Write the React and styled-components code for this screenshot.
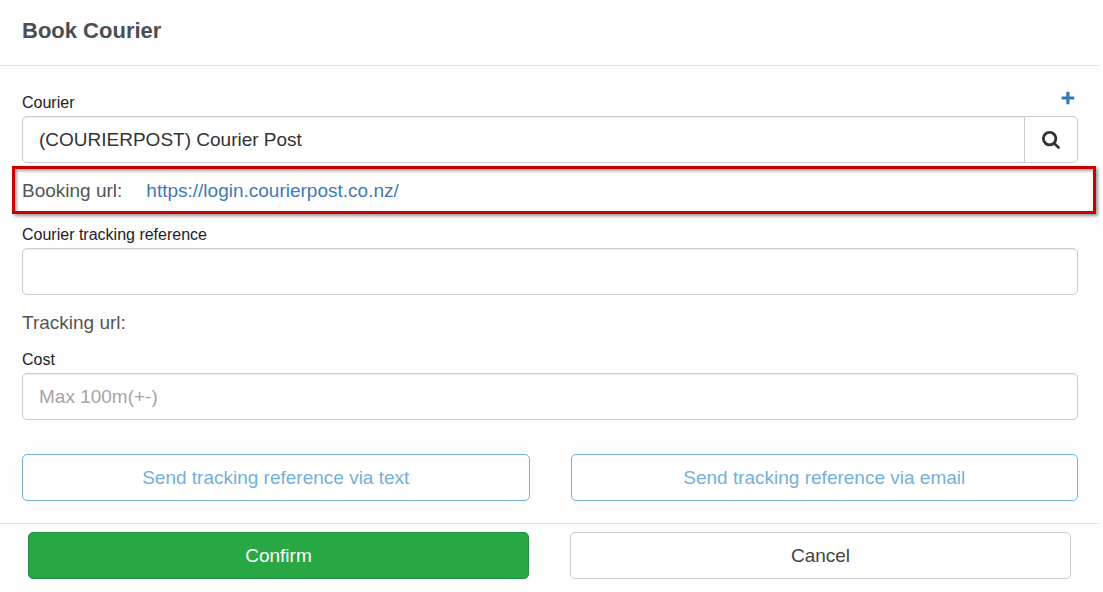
import React, { useState } from 'react';
import styled, { createGlobalStyle, css } from 'styled-components';

export default function App() {
    const [courier, setCourier] = useState('(COURIERPOST) Courier Post');
    const [reference, setReference] = useState('');
    const [cost, setCost] = useState('');

    return (
        <>
            <GlobalStyle />
            <Dialog>
                <Header>
                    <Title>Book Courier</Title>
                </Header>
                <Body>
                    <LabelRow>
                        <Label htmlFor="courier">Courier</Label>
                        <AddButton type="button" aria-label="Add courier">
                            <PlusIcon />
                        </AddButton>
                    </LabelRow>
                    <InputGroup>
                        <Input
                            id="courier"
                            grouped
                            value={courier}
                            onChange={(e) => setCourier(e.target.value)}
                        />
                        <SearchButton type="button" aria-label="Search couriers">
                            <SearchIcon />
                        </SearchButton>
                    </InputGroup>
                    <HighlightRow>
                        <span>Booking url:</span>
                        <UrlLink href="https://login.courierpost.co.nz/">
                            https://login.courierpost.co.nz/
                        </UrlLink>
                    </HighlightRow>
                    <LabelRow>
                        <Label htmlFor="reference">Courier tracking reference</Label>
                    </LabelRow>
                    <Input
                        id="reference"
                        value={reference}
                        onChange={(e) => setReference(e.target.value)}
                    />
                    <UrlRow>Tracking url:</UrlRow>
                    <LabelRow>
                        <Label htmlFor="cost">Cost</Label>
                    </LabelRow>
                    <Input
                        id="cost"
                        placeholder="Max 100m(+-)"
                        value={cost}
                        onChange={(e) => setCost(e.target.value)}
                    />
                    <SendRow>
                        <Button type="button" variant="outline">Send tracking reference via text</Button>
                        <Button type="button" variant="outline">Send tracking reference via email</Button>
                    </SendRow>
                </Body>
                <Footer>
                    <Button type="button" variant="success">Confirm</Button>
                    <Button type="button" variant="plain">Cancel</Button>
                </Footer>
            </Dialog>
        </>
    );
}

const PlusIcon = () => (
    <svg width="14" height="14" viewBox="0 0 14 14" fill="currentColor" aria-hidden="true">
        <path d="M5.3 0.8h3.2v4.6h4.7v3.2h-4.7v4.6h-3.2v-4.6h-4.7v-3.2h4.7z" />
    </svg>
);

const SearchIcon = () => (
    <svg width="18" height="18" viewBox="0 0 1664 1664" fill="currentColor" aria-hidden="true">
        <path d="M1152 704q0-185-131.500-316.500T704 256 387.500 387.500 256 704t131.500 316.500T704 1152t316.500-131.500T1152 704zm512 832q0 52-38 90t-90 38q-54 0-90-38l-343-342q-179 124-399 124-143 0-273.500-55.500t-225-150-150-225T0 704t55.500-273.500 150-225 225-150T704 0t273.500 55.500 225 150 150 225T1408 704q0 220-124 399l343 343q37 37 37 90z" />
    </svg>
);

const GlobalStyle = createGlobalStyle`
    * {
        box-sizing: border-box;
    }
    body {
        margin: 0;
        background: #fefefe;
        color: #555;
        font-family: "Liberation Sans", Arial, sans-serif;
        font-size: 19px;
    }
    button, input {
        font-family: inherit;
        font-size: inherit;
    }
`;
const Dialog = styled.main`
    margin-right: 3px;
`;
const Header = styled.header`
    padding: 16px 22px 19px;
    border-bottom: 1px solid #e5e5e5;
`;
const Title = styled.h1`
    margin: 0;
    font-size: 22px;
    line-height: 30px;
    font-weight: 700;
    color: #4c4f52;
`;
const Body = styled.div`
    padding: 27px 22px 22px;
`;
const LabelRow = styled.div`
    display: flex;
    justify-content: space-between;
    align-items: flex-start;
    height: 20px;
    margin-bottom: 3px;
`;
const Label = styled.label`
    font-size: 16px;
    line-height: 20px;
    color: #222;
`;
const AddButton = styled.button`
    display: flex;
    padding: 0 3px;
    margin-top: -2px;
    border: none;
    background: none;
    color: #337ab7;
    cursor: pointer;
`;
const InputGroup = styled.div`
    display: flex;
`;
const Input = styled.input.withConfig({ shouldForwardProp: (prop) => prop !== 'grouped' })`
    display: block;
    width: 100%;
    min-width: 0;
    height: 47px;
    padding: 0 16px;
    border: 1px solid #ccc;
    border-radius: ${({ grouped }) => (grouped ? '5px 0 0 5px' : '5px')};
    background: #fff;
    color: #333;
    box-shadow: inset 0 1px 1px rgba(0, 0, 0, 0.08);
    &::placeholder {
        color: #a5a5a5;
        opacity: 1;
    }
`;
const SearchButton = styled.button`
    display: flex;
    align-items: center;
    justify-content: center;
    flex: 0 0 54px;
    margin-left: -1px;
    border: 1px solid #ccc;
    border-radius: 0 5px 5px 0;
    background: #fff;
    color: #333;
    cursor: pointer;
`;
const HighlightRow = styled.div`
    display: flex;
    align-items: center;
    gap: 24px;
    height: 48px;
    margin: 3px -18px 11px -10px;
    padding: 2px 7px 0;
    border: 3px solid #c80000;
    box-shadow: 2px 2px 3px rgba(0, 0, 0, 0.4), inset 2px 2px 3px rgba(0, 0, 0, 0.35);
`;
const UrlLink = styled.a`
    color: #4279b5;
    text-decoration: none;
`;
const UrlRow = styled.div`
    line-height: 55px;
`;
const SendRow = styled.div`
    display: grid;
    grid-template-columns: 1fr 1fr;
    gap: 41px;
    margin-top: 34px;
`;
const Footer = styled.footer`
    display: grid;
    grid-template-columns: 1fr 1fr;
    gap: 41px;
    padding: 8px 29px 12px 28px;
    border-top: 1px solid #e5e5e5;
`;
const variants = {
    outline: css`
        border-color: #74afd8;
        background: #fff;
        color: #74afd8;
    `,
    success: css`
        border-color: #23903c;
        background: #28a745;
        color: #fff;
    `,
    plain: css`
        border-color: #ccc;
        background: #fff;
        color: #444;
    `,
};
const Button = styled.button.withConfig({ shouldForwardProp: (prop) => prop !== 'variant' })`
    height: 47px;
    padding: 0 16px;
    border: 1px solid;
    border-radius: 5px;
    cursor: pointer;
    ${({ variant }) => variants[variant]}
`;
